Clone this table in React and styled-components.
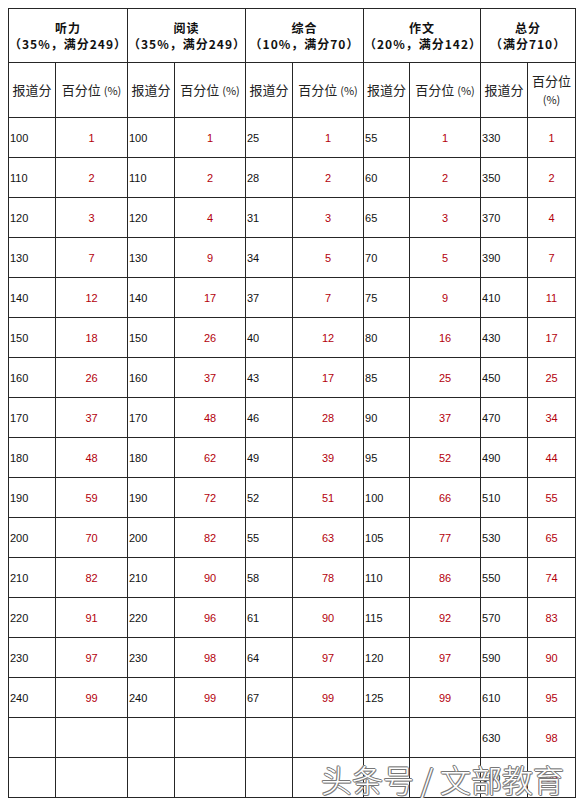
import React from "react";
import styled, { createGlobalStyle } from "styled-components";

const GlobalStyle = createGlobalStyle`
  body {
    margin: 8px;
    background: #ffffff;
    font-family: "Liberation Sans", "Noto Sans CJK SC", sans-serif;
  }
`;

const Wrap = styled.div`
  position: relative;
  width: 568px;
`;

const Table = styled.table`
  width: 568px;
  border-collapse: collapse;
  table-layout: fixed;
  border: 1px solid #262626;
`;

const GroupCell = styled.th`
  height: 53px;
  padding: 0;
  border: 1px solid #262626;
  font-family: "Noto Sans CJK SC", sans-serif;
  font-size: 12px;
  font-weight: 700;
  line-height: 16px;
  letter-spacing: 1px;
  color: #111;
  text-align: center;
  vertical-align: middle;
`;

const SubCell = styled.td`
  height: 54px;
  padding: 0 2px;
  border: 1px solid #262626;
  font-family: "Noto Sans CJK SC", sans-serif;
  font-size: 13px;
  line-height: 18px;
  color: #222;
  text-align: center;
  vertical-align: middle;
`;

const Small = styled.span`
  font-size: 11px;
`;

const Cell = styled.td`
  height: 39px;
  padding: 0 1px;
  border: 1px solid #262626;
  font-size: 11px;
  color: ${(p) => (p.$pct ? "#b3000b" : "#111")};
  text-align: ${(p) => (p.$pct ? "center" : "left")};
  vertical-align: middle;
`;

const Watermark = styled.div`
  position: absolute;
  left: 313px;
  bottom: 1px;
  font-family: "Noto Sans CJK SC", sans-serif;
  font-size: 31px;
  font-weight: 300;
  line-height: 36px;
  color: #fff;
  white-space: pre;
  text-shadow: 1px 0 0 #777, -1px 0 0 #777, 0 1px 0 #777, 0 -1px 0 #777,
    1px 1px 0 #999, -1px -1px 0 #999;
`;

const widths = [47, 72, 47, 71, 47, 71, 46, 71, 47, 48];

const groups = [
  ["听力", "（35%，满分249）"],
  ["阅读", "（35%，满分249）"],
  ["综合", "（10%，满分70）"],
  ["作文", "（20%，满分142）"],
  ["总分", "（满分710）"],
];

const cols = [
  {
    s: [100, 110, 120, 130, 140, 150, 160, 170, 180, 190, 200, 210, 220, 230, 240],
    p: [1, 2, 3, 7, 12, 18, 26, 37, 48, 59, 70, 82, 91, 97, 99],
  },
  {
    s: [100, 110, 120, 130, 140, 150, 160, 170, 180, 190, 200, 210, 220, 230, 240],
    p: [1, 2, 4, 9, 17, 26, 37, 48, 62, 72, 82, 90, 96, 98, 99],
  },
  {
    s: [25, 28, 31, 34, 37, 40, 43, 46, 49, 52, 55, 58, 61, 64, 67],
    p: [1, 2, 3, 5, 7, 12, 17, 28, 39, 51, 63, 78, 90, 97, 99],
  },
  {
    s: [55, 60, 65, 70, 75, 80, 85, 90, 95, 100, 105, 110, 115, 120, 125],
    p: [1, 2, 3, 5, 9, 16, 25, 37, 52, 66, 77, 86, 92, 97, 99],
  },
  {
    s: [330, 350, 370, 390, 410, 430, 450, 470, 490, 510, 530, 550, 570, 590, 610, 630, 650],
    p: [1, 2, 4, 7, 11, 17, 25, 34, 44, 55, 65, 74, 83, 90, 95, 98, 99],
  },
];

const rows = Array.from({ length: 17 }, (_, i) => i);

export default function App() {
  return (
    <>
      <GlobalStyle />
      <Wrap>
        <Table>
          <colgroup>
            {widths.map((w, i) => (
              <col key={i} style={{ width: w }} />
            ))}
          </colgroup>
          <thead>
            <tr>
              {groups.map(([name, note]) => (
                <GroupCell key={name} colSpan={2}>
                  {name}
                  <br />
                  {note}
                </GroupCell>
              ))}
            </tr>
            <tr>
              {groups.map((g, i) => (
                <React.Fragment key={i}>
                  <SubCell>报道分</SubCell>
                  {i === 4 ? (
                    <SubCell>
                      百分位
                      <br />
                      <Small>(%)</Small>
                    </SubCell>
                  ) : (
                    <SubCell>
                      百分位 <Small>(%)</Small>
                    </SubCell>
                  )}
                </React.Fragment>
              ))}
            </tr>
          </thead>
          <tbody>
            {rows.map((r) => (
              <tr key={r}>
                {cols.map((c, i) => (
                  <React.Fragment key={i}>
                    <Cell>{c.s[r] ?? ""}</Cell>
                    <Cell $pct>{c.p[r] ?? ""}</Cell>
                  </React.Fragment>
                ))}
              </tr>
            ))}
          </tbody>
        </Table>
        <Watermark>头条号 / 文部教育</Watermark>
      </Wrap>
    </>
  );
}
